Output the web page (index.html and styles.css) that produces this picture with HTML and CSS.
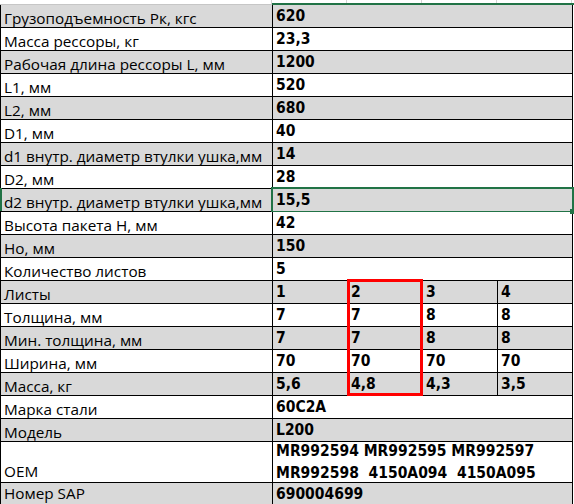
FILE: index.html
```html
<!DOCTYPE html>
<html lang="ru">
<head>
<meta charset="utf-8">
<title>Рессора</title>
<link rel="stylesheet" href="styles.css">
</head>
<body>
<div class="sheet">
  <div class="strip">
    <div class="strip-a"></div>
    <div class="strip-b"><span></span><span></span><span></span><span></span></div>
  </div>
  <div class="grid">
    <div class="c a gray">Грузоподъемность Рк, кгс</div><div class="c v gray span">620</div>
    <div class="c a">Масса рессоры, кг</div><div class="c v span">23,3</div>
    <div class="c a gray">Рабочая длина рессоры L, мм</div><div class="c v gray span">1200</div>
    <div class="c a">L1, мм</div><div class="c v span">520</div>
    <div class="c a gray">L2, мм</div><div class="c v gray span">680</div>
    <div class="c a">D1, мм</div><div class="c v span">40</div>
    <div class="c a gray">d1 внутр. диаметр втулки ушка,мм</div><div class="c v gray span">14</div>
    <div class="c a">D2, мм</div><div class="c v span">28</div>
    <div class="c a gray mark">d2 внутр. диаметр втулки ушка,мм</div><div class="c v gray span sel">15,5</div>
    <div class="c a">Высота пакета H, мм</div><div class="c v span">42</div>
    <div class="c a gray">Ho, мм</div><div class="c v gray span">150</div>
    <div class="c a">Количество листов</div><div class="c v span">5</div>
    <div class="c a gray">Листы</div><div class="c v gray">1</div><div class="c v gray">2</div><div class="c v gray">3</div><div class="c v gray">4</div>
    <div class="c a">Толщина, мм</div><div class="c v">7</div><div class="c v">7</div><div class="c v">8</div><div class="c v">8</div>
    <div class="c a gray">Мин. толщина, мм</div><div class="c v gray">7</div><div class="c v gray">7</div><div class="c v gray">8</div><div class="c v gray">8</div>
    <div class="c a">Ширина, мм</div><div class="c v">70</div><div class="c v">70</div><div class="c v">70</div><div class="c v">70</div>
    <div class="c a gray">Масса, кг</div><div class="c v gray">5,6</div><div class="c v gray">4,8</div><div class="c v gray">4,3</div><div class="c v gray">3,5</div>
    <div class="c a">Марка стали</div><div class="c v span">60С2А</div>
    <div class="c a gray">Модель</div><div class="c v gray span">L200</div>
    <div class="c a oem">OEM</div><div class="c v span multi"><span>MR992594 MR992595 MR992597</span><span>MR992598  4150A094  4150A095</span></div>
    <div class="c a gray last">Номер SAP</div><div class="c v gray span">690004699</div>
    <div class="redbox"></div>
  </div>
</div>
</body>
</html>
```

FILE: styles.css
```css
html, body {
  margin: 0;
  padding: 0;
  background: #ffffff;
}
.sheet {
  width: 574px;
  height: 504px;
  overflow: hidden;
}
.strip {
  display: flex;
  height: 5px;
}
.strip-a {
  width: 272px;
  box-sizing: border-box;
  border-bottom: 1px solid #c6c6c6;
  border-right: 1px solid #d4d4d4;
}
.strip-b {
  display: flex;
  width: 302px;
  box-sizing: border-box;
  border-bottom: 2px solid #217346;
}
.strip-b span {
  width: 75px;
  box-sizing: border-box;
  border-right: 1px solid #d4d4d4;
}
.grid {
  position: relative;
  display: grid;
  grid-template-columns: 272px repeat(4, 75px);
  grid-template-rows: repeat(19, 23px) 41px 23px;
  width: 573px;
  box-sizing: border-box;
  border-left: 1px solid #000;
}
.c {
  box-sizing: border-box;
  border-right: 1px solid #000;
  border-bottom: 1px solid #000;
  background: #ffffff;
  color: #000;
  display: flex;
  white-space: pre;
  overflow: visible;
  position: relative;
}
.gray {
  background: #d9d9d9;
}
.a {
  font-family: "Open Sans", "Noto Sans", sans-serif;
  font-size: 15.3px;
  line-height: 18px;
  align-items: flex-end;
  padding-left: 3px;
}
.oem {
  padding-bottom: 2px;
}
.last {
  align-items: flex-start;
  line-height: 21px;
}
.v {
  font-family: "DejaVu Sans Condensed", "DejaVu Sans", sans-serif;
  font-stretch: semi-condensed;
  font-weight: bold;
  font-size: 15.5px;
  line-height: 22px;
  align-items: flex-start;
  padding-left: 3px;
}
.span {
  grid-column: span 4;
}
.multi {
  flex-direction: column;
}
.multi span {
  display: block;
  position: relative;
  top: -2px;
}
.sel::after {
  content: "";
  position: absolute;
  top: -2px;
  left: -2px;
  right: -2px;
  bottom: -2px;
  border: 2px solid #217346;
}
.sel::before {
  content: "";
  position: absolute;
  right: -3px;
  bottom: -3px;
  width: 5px;
  height: 5px;
  background: #217346;
  z-index: 2;
}
.mark::before {
  content: "";
  position: absolute;
  left: -1px;
  top: -1px;
  bottom: 0;
  width: 2px;
  background: #217346;
}
.redbox {
  position: absolute;
  left: 346px;
  top: 274px;
  width: 76px;
  height: 117px;
  box-sizing: border-box;
  border: 3px solid #ff0000;
}
```
